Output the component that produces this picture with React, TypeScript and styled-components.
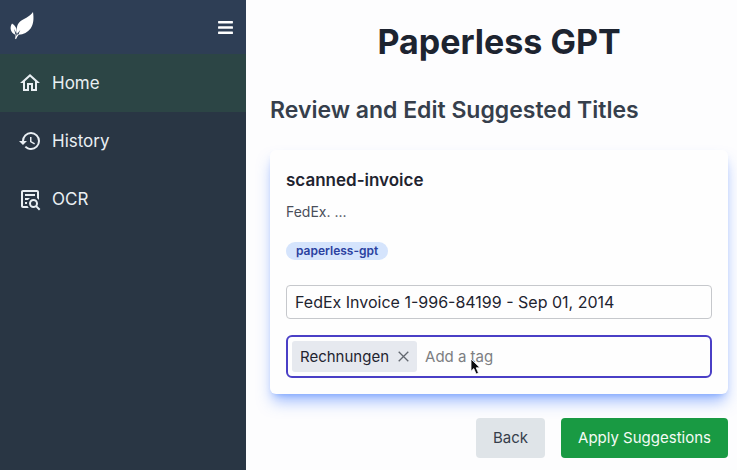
import React, { useState } from "react";
import styled, { createGlobalStyle } from "styled-components";
import { FaBars } from "react-icons/fa";

const GlobalStyle = createGlobalStyle`
  *, *::before, *::after { box-sizing: border-box; }
  body {
    margin: 0;
    background: #fdfdfe;
    color: #1f2430;
    font-family: Inter, "Liberation Sans", sans-serif;
    font-size: 16px;
    line-height: 24px;
  }
  h1, h2, h3, p, ul { margin: 0; padding: 0; }
  button, input { font: inherit; color: inherit; }
`;

const Page = styled.div`
  display: flex;
  min-height: 100vh;
`;

const Sidebar = styled.aside`
  flex: 0 0 246px;
  background: #293644;
  color: #e9eff3;
`;

const SidebarHeader = styled.header`
  display: flex;
  align-items: center;
  justify-content: space-between;
  height: 54px;
  padding: 0 12px 0 8px;
  background: #2e3e55;
`;

const MenuButton = styled.button`
  display: flex;
  padding: 4px 0;
  border: 0;
  background: none;
  color: #fff;
  font-size: 17px;
  cursor: pointer;
`;

const NavList = styled.ul`
  list-style: none;
`;

const NavLink = styled.a<{ $active?: boolean }>`
  display: flex;
  align-items: center;
  gap: 10px;
  height: 58px;
  padding: 0 18px;
  background: ${(p) => (p.$active ? "#2c4545" : "transparent")};
  color: inherit;
  font-size: 17px;
  text-decoration: none;
`;

const Main = styled.main`
  flex: 1;
  min-width: 0;
  padding: 22px 9px 12px 24px;
`;

const Title = styled.h1`
  color: #1d2430;
  font-size: 34px;
  font-weight: 700;
  line-height: 40px;
  text-align: center;
`;

const Subtitle = styled.h2`
  margin-top: 32px;
  color: #363f4c;
  font-size: 23px;
  font-weight: 600;
  line-height: 32px;
`;

const Card = styled.section`
  display: flex;
  flex-direction: column;
  align-items: flex-start;
  margin-top: 24px;
  padding: 16px;
  border-radius: 6px;
  background: #fefefe;
  box-shadow: 0 10px 15px -3px rgba(59, 120, 255, 0.5), 0 4px 6px -4px rgba(59, 120, 255, 0.5);
`;

const DocumentName = styled.h3`
  font-size: 17px;
  font-weight: 600;
  line-height: 28px;
`;

const Excerpt = styled.p`
  margin-top: 8px;
  color: #4a4f5a;
  font-size: 14px;
  line-height: 20px;
`;

const Badge = styled.span`
  margin-top: 20px;
  padding: 0 10px;
  border-radius: 9px;
  background: #d5e4fc;
  color: #2b41a0;
  font-size: 12px;
  font-weight: 600;
  line-height: 18px;
`;

const TitleInput = styled.input`
  width: 100%;
  height: 34px;
  margin-top: 25px;
  padding: 0 8px;
  border: 1px solid #c6c8cc;
  border-radius: 4px;
  background: #fefefe;
  outline: 0;
`;

const TagField = styled.div`
  position: relative;
  display: flex;
  align-items: center;
  gap: 8px;
  width: 100%;
  height: 43px;
  margin-top: 16px;
  padding: 0 4px;
  border: 2px solid #4a3fc6;
  border-radius: 6px;
  font-size: 15px;
`;

const Tag = styled.span`
  display: flex;
  align-items: center;
  gap: 9px;
  height: 31px;
  padding: 0 8px;
  border-radius: 3px;
  background: #e6e9ef;
`;

const RemoveButton = styled.button`
  display: flex;
  padding: 0;
  border: 0;
  background: none;
  color: #62676f;
  cursor: pointer;
`;

const TagInput = styled.input`
  flex: 1;
  min-width: 0;
  padding: 0;
  border: 0;
  background: transparent;
  outline: 0;
  &::placeholder { color: #7d7e82; opacity: 1; }
`;

const Pointer = styled.svg`
  position: absolute;
  top: 21px;
  left: 182px;
  pointer-events: none;
`;

const Actions = styled.div`
  display: flex;
  justify-content: flex-end;
  gap: 16px;
  margin-top: 24px;
`;

const ActionButton = styled.button<{ $primary?: boolean }>`
  height: 40px;
  padding: 0 17px;
  border: 0;
  border-radius: 4px;
  background: ${(p) => (p.$primary ? "#199a43" : "#dfe4e8")};
  color: ${(p) => (p.$primary ? "#f4fbf5" : "#363e4b")};
  font-size: 15px;
  cursor: pointer;
`;

const HOME =
  "M12 5.69L17 10.19V18H15V12H9V18H7V10.19L12 5.69M12 3L2 12H5V20H11V14H13V20H19V12H22";
const HISTORY =
  "M13.5,8H12V13L16.28,15.54L17,14.33L13.5,12.25V8M13,3A9,9 0 0,0 4,12H1L4.96,16.03L9,12H6A7,7 0 0,1 13,5A7,7 0 0,1 20,12A7,7 0 0,1 13,19C11.07,19 9.32,18.21 8.06,16.94L6.64,18.36C8.27,20 10.5,21 13,21A9,9 0 0,0 22,12A9,9 0 0,0 13,3";
const TEXT_SEARCH =
  "M15.5,12C18,12 20,14 20,16.5C20,17.38 19.75,18.21 19.31,18.9L22.39,22L21,23.39L17.88,20.32C17.19,20.75 16.37,21 15.5,21C13,21 11,19 11,16.5C11,14 13,12 15.5,12M15.5,14A2.5,2.5 0 0,0 13,16.5A2.5,2.5 0 0,0 15.5,19A2.5,2.5 0 0,0 18,16.5A2.5,2.5 0 0,0 15.5,14M5,3H19C20.11,3 21,3.89 21,5V13.03C20.5,12.23 19.81,11.54 19,11V5H5V19H9.5C9.81,19.75 10.26,20.42 10.81,21H5C3.89,21 3,20.11 3,19V5C3,3.89 3.89,3 5,3M7,7H17V9H7V7M7,11H12.03C11.23,11.5 10.54,12.19 10,13H7V11M7,15H9.17C9.06,15.5 9,16 9,16.5V17H7V15Z";

const NAV = [
  { label: "Home", path: HOME, active: true },
  { label: "History", path: HISTORY },
  { label: "OCR", path: TEXT_SEARCH },
];

function Logo() {
  return (
    <svg width="28" height="34" viewBox="0 0 28 34" fill="#fff" role="img" aria-label="Paperless">
      <path d="M25 2C26 8.5 25.6 14 22.6 18.4C19.8 22.4 15.4 24.3 10.8 24.8C10.8 23.2 11.4 21.6 12.4 20C11 21.2 10 22.6 9.5 24C8.2 19.6 8.6 15.2 11.6 12C15.2 8.4 21.6 7.4 25 2Z" />
      <path d="M4 13.5C7 15.4 9 18.2 8.8 21.4L8.5 24C7.8 22 7 20.4 6 19C6.6 21 7.2 22.8 7.4 24.8C3.2 22.8 1 18.4 4 13.5Z" />
      <path d="M8.2 23.5L8.4 26L10 23.8L10.9 24.5C9.6 26 8.7 27.4 8 29.2L7 28.6C7.5 27.4 7.7 26 7.5 24.4Z" />
    </svg>
  );
}

export default function App() {
  const [title, setTitle] = useState("FedEx Invoice 1-996-84199 - Sep 01, 2014");
  const [tags, setTags] = useState(["Rechnungen"]);

  return (
    <Page>
      <GlobalStyle />
      <Sidebar>
        <SidebarHeader>
          <Logo />
          <MenuButton aria-label="Toggle menu">
            <FaBars />
          </MenuButton>
        </SidebarHeader>
        <nav>
          <NavList>
            {NAV.map((item) => (
              <li key={item.label}>
                <NavLink href="#" $active={item.active}>
                  <svg width="24" height="24" viewBox="0 0 24 24" fill="currentColor" aria-hidden="true">
                    <path d={item.path} />
                  </svg>
                  {item.label}
                </NavLink>
              </li>
            ))}
          </NavList>
        </nav>
      </Sidebar>
      <Main>
        <Title>Paperless GPT</Title>
        <Subtitle>Review and Edit Suggested Titles</Subtitle>
        <Card>
          <DocumentName>scanned-invoice</DocumentName>
          <Excerpt>FedEx. ...</Excerpt>
          <Badge>paperless-gpt</Badge>
          <TitleInput aria-label="Suggested title" value={title} onChange={(e) => setTitle(e.target.value)} />
          <TagField>
            {tags.map((tag) => (
              <Tag key={tag}>
                {tag}
                <RemoveButton
                  aria-label={`Remove ${tag}`}
                  onClick={() => setTags(tags.filter((t) => t !== tag))}
                >
                  <svg width="11" height="11" viewBox="0 0 11 11" stroke="currentColor" strokeWidth="1.3" fill="none">
                    <path d="M0.7 0.7L10.3 10.3M10.3 0.7L0.7 10.3" />
                  </svg>
                </RemoveButton>
              </Tag>
            ))}
            <TagInput aria-label="Add a tag" placeholder="Add a tag" />
            <Pointer width="12" height="18" viewBox="0 0 12 18" aria-hidden="true">
              <path
                d="M1 1V13.2L3.8 10.6L6.1 16L8.5 15L6.2 9.8H10Z"
                fill="#0b0b0d"
                stroke="#fff"
                strokeWidth="0.8"
              />
            </Pointer>
          </TagField>
        </Card>
        <Actions>
          <ActionButton>Back</ActionButton>
          <ActionButton $primary>Apply Suggestions</ActionButton>
        </Actions>
      </Main>
    </Page>
  );
}
